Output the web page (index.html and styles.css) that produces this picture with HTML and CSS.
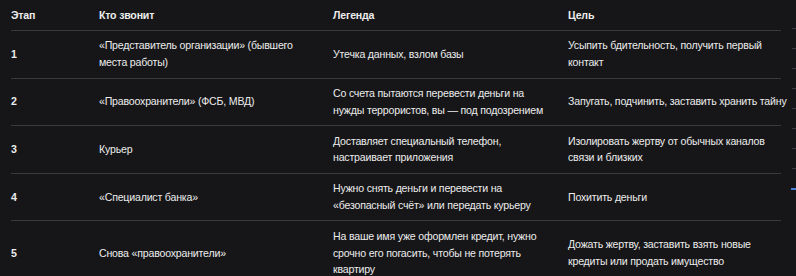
FILE: index.html
```html
<!DOCTYPE html>
<html lang="ru">
<head>
<meta charset="utf-8">
<link rel="stylesheet" href="styles.css">
</head>
<body>
<div class="page">
  <table class="scheme">
    <colgroup>
      <col class="c-stage">
      <col class="c-who">
      <col class="c-legend">
      <col class="c-goal">
    </colgroup>
    <thead>
      <tr><th>Этап</th><th>Кто звонит</th><th>Легенда</th><th>Цель</th></tr>
    </thead>
    <tbody>
      <tr><td>1</td><td>«Представитель организации» (бывшего<br>места работы)</td><td>Утечка данных, взлом базы</td><td>Усыпить бдительность, получить первый<br>контакт</td></tr>
      <tr><td>2</td><td>«Правоохранители» (ФСБ, МВД)</td><td>Со счета пытаются перевести деньги на<br>нужды террористов, вы — под подозрением</td><td>Запугать, подчинить, заставить хранить тайну</td></tr>
      <tr><td>3</td><td>Курьер</td><td>Доставляет специальный телефон,<br>настраивает приложения</td><td>Изолировать жертву от обычных каналов<br>связи и близких</td></tr>
      <tr><td>4</td><td>«Специалист банка»</td><td>Нужно снять деньги и перевести на<br>«безопасный счёт» или передать курьеру</td><td>Похитить деньги</td></tr>
      <tr><td>5</td><td>Снова «правоохранители»</td><td>На ваше имя уже оформлен кредит, нужно<br>срочно его погасить, чтобы не потерять<br>квартиру</td><td>Дожать жертву, заставить взять новые<br>кредиты или продать имущество</td></tr>
    </tbody>
  </table>
  <div class="minimap">
    <span class="tick"></span><span class="tick"></span><span class="tick"></span><span class="tick"></span><span class="tick"></span><span class="tick"></span><span class="tick"></span><span class="tick"></span><span class="tick active"></span>
  </div>
</div>
</body>
</html>
```
FILE: styles.css
```css
html, body {
  margin: 0;
  padding: 0;
  background: #161618;
  height: 100%;
  overflow: hidden;
}
.page {
  position: relative;
  padding: 0 15px 0 11px;
  font-family: "Liberation Sans", Arial, sans-serif;
  font-size: 10.6px;
  letter-spacing: -0.2px;
  color: #ececec;
}
.scheme {
  width: 770px;
  border-collapse: collapse;
  table-layout: fixed;
}
.c-stage { width: 88px; }
.c-who { width: 234px; }
.c-legend { width: 235px; }
.c-goal { width: 213px; }
.scheme th {
  text-align: left;
  font-weight: 700;
  line-height: 16.8px;
  padding: 6.6px 0;
  border-bottom: 1px solid #3a3a3c;
  white-space: nowrap;
}
.scheme td {
  line-height: 16.8px;
  padding: 6.5px 0;
  vertical-align: middle;
  border-bottom: 1px solid #3a3a3c;
  white-space: nowrap;
}
.scheme td:first-child { font-weight: 700; }
.minimap {
  position: absolute;
  top: 28px;
  right: 0;
  display: flex;
  flex-direction: column;
  align-items: flex-end;
  gap: 19px;
}
.tick {
  display: block;
  width: 4px;
  height: 1px;
  background: #3c3c40;
}
.tick.active {
  width: 5px;
  height: 2px;
  background: #4a7fd8;
}
```
